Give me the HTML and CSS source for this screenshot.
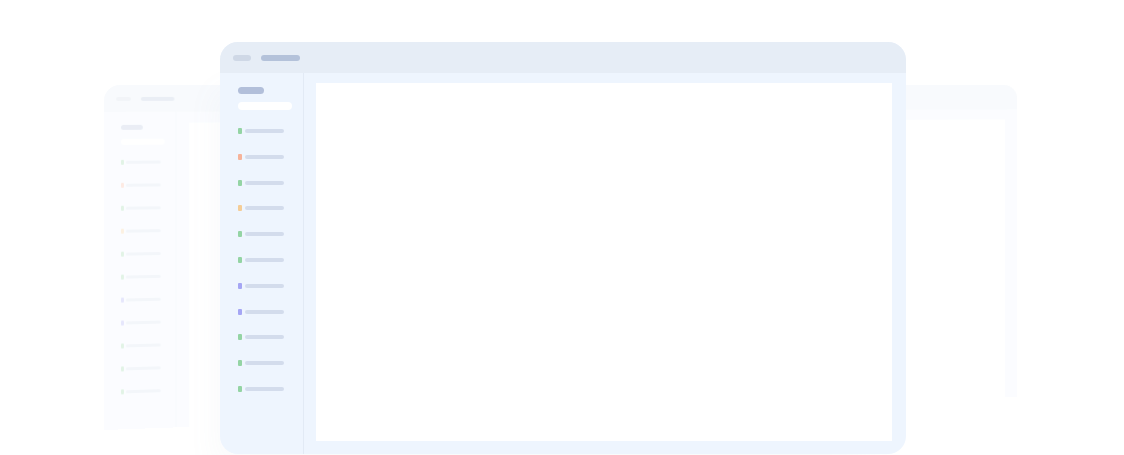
FILE: index.html
```html
<!DOCTYPE html>
<html lang="en">
<head>
    <meta charset="UTF-8">
    <meta name="viewport" content="width=device-width, initial-scale=1.0">
    <title>Workspace preview</title>
    <link rel="stylesheet" href="styles.css">
</head>
<body>
    <div class="stage">
        <!-- back window, tilted away -->
        <div class="window-back">
            <div class="back-titlebar">
                <span class="back-pill back-pill-short"></span>
                <span class="back-pill back-pill-long"></span>
            </div>
            <div class="back-body">
                <div class="back-sidebar">
                    <div class="back-heading"></div>
                    <div class="back-search"></div>
                    <div class="back-list">
                        <div class="back-item"><span class="back-dot green"></span><span class="back-line"></span></div>
                        <div class="back-item"><span class="back-dot salmon"></span><span class="back-line"></span></div>
                        <div class="back-item"><span class="back-dot green"></span><span class="back-line"></span></div>
                        <div class="back-item"><span class="back-dot amber"></span><span class="back-line"></span></div>
                        <div class="back-item"><span class="back-dot green"></span><span class="back-line"></span></div>
                        <div class="back-item"><span class="back-dot green"></span><span class="back-line"></span></div>
                        <div class="back-item"><span class="back-dot violet"></span><span class="back-line"></span></div>
                        <div class="back-item"><span class="back-dot violet"></span><span class="back-line"></span></div>
                        <div class="back-item"><span class="back-dot green"></span><span class="back-line"></span></div>
                        <div class="back-item"><span class="back-dot green"></span><span class="back-line"></span></div>
                        <div class="back-item"><span class="back-dot green"></span><span class="back-line"></span></div>
                    </div>
                </div>
                <div class="back-main">
                    <div class="back-canvas"></div>
                </div>
            </div>
        </div>

        <!-- front window -->
        <div class="window">
            <div class="titlebar">
                <span class="pill pill-short"></span>
                <span class="pill pill-long"></span>
            </div>
            <div class="window-body">
                <div class="sidebar">
                    <div class="sidebar-heading"></div>
                    <div class="sidebar-search"></div>
                    <div class="item-list">
                        <div class="item"><span class="dot green"></span><span class="line"></span></div>
                        <div class="item"><span class="dot salmon"></span><span class="line"></span></div>
                        <div class="item"><span class="dot green"></span><span class="line"></span></div>
                        <div class="item"><span class="dot amber"></span><span class="line"></span></div>
                        <div class="item"><span class="dot green"></span><span class="line"></span></div>
                        <div class="item"><span class="dot green"></span><span class="line"></span></div>
                        <div class="item"><span class="dot violet"></span><span class="line"></span></div>
                        <div class="item"><span class="dot violet"></span><span class="line"></span></div>
                        <div class="item"><span class="dot green"></span><span class="line"></span></div>
                        <div class="item"><span class="dot green"></span><span class="line"></span></div>
                        <div class="item"><span class="dot green"></span><span class="line"></span></div>
                    </div>
                </div>
                <div class="main">
                    <div class="canvas"></div>
                </div>
            </div>
        </div>
    </div>
</body>
</html>
```

FILE: styles.css
```css
body {
    margin: 0;
    background-color: #fff;
    font-family: "Liberation Sans", Arial, sans-serif;
    overflow: hidden;
}

.stage {
    position: relative;
    width: 1124px;
    height: 455px;
    overflow: hidden;
}

/* colour chips shared by both windows */
.green { background-color: #94d4a4; }
.salmon { background-color: #f6b39a; }
.amber { background-color: #f4cd97; }
.violet { background-color: #a5a6f4; }

/* ---------- front window ---------- */

.window {
    position: absolute;
    left: 220px;
    top: 42px;
    width: 686px;
    height: 412px;
    border-radius: 18px;
    background-color: #eef5fe;
    display: flex;
    flex-direction: column;
    overflow: hidden;
    box-shadow: -22px 30px 30px -18px rgba(140, 155, 180, 0.05);
}

.titlebar {
    height: 31px;
    flex-shrink: 0;
    background-color: #e6edf6;
    display: flex;
    align-items: center;
    gap: 10px;
    padding-left: 13px;
}

.pill {
    height: 6px;
    border-radius: 3px;
}

.pill-short {
    width: 18px;
    background-color: #cfd8e6;
}

.pill-long {
    width: 39px;
    background-color: #b4c2da;
}

.window-body {
    flex-grow: 1;
    display: flex;
}

.sidebar {
    width: 65px;
    padding: 14px 0 0 18px;
    border-right: 1px solid #e2eaf5;
}

.sidebar-heading {
    width: 26px;
    height: 7px;
    border-radius: 4px;
    background-color: #b2bfda;
}

.sidebar-search {
    width: 54px;
    height: 8px;
    margin-top: 8px;
    border-radius: 4px;
    background-color: #fff;
}

.item-list {
    display: flex;
    flex-direction: column;
    gap: 19.8px;
    margin-top: 18px;
}

.item {
    display: flex;
    align-items: center;
    height: 6px;
}

.dot {
    width: 4px;
    height: 6px;
    border-radius: 1px;
}

.line {
    width: 39px;
    height: 4px;
    margin-left: 3px;
    border-radius: 2px;
    background-color: #d3dcec;
}

.main {
    flex-grow: 1;
    display: flex;
    padding: 10px 14px 13px 12px;
}

.canvas {
    flex-grow: 1;
    background-color: #fff;
}

/* ---------- back window (tilted, faded) ---------- */

.window-back {
    position: absolute;
    left: 104px;
    top: 85px;
    width: 1010px;
    height: 345px;
    transform-origin: 0 0;
    transform: matrix3d(1, 0, 0, 0.0001048, 0, 1, 0, 0, 0, 0, 1, 0, 0, 0, 0, 1);
    border-radius: 16px 16px 0 0;
    background-color: #eef5fe;
    display: flex;
    flex-direction: column;
    overflow: hidden;
    opacity: 0.28;
}

.back-titlebar {
    height: 27px;
    flex-shrink: 0;
    background-color: #e6edf6;
    display: flex;
    align-items: center;
    gap: 10px;
    padding-left: 12px;
}

.back-pill {
    height: 4px;
    border-radius: 2px;
}

.back-pill-short {
    width: 15px;
    background-color: #cfd8e6;
}

.back-pill-long {
    width: 34px;
    background-color: #b4c2da;
}

.back-body {
    flex-grow: 1;
    display: flex;
}

.back-sidebar {
    width: 55px;
    padding: 13px 0 0 17px;
    border-right: 1px solid #e2eaf5;
}

.back-heading {
    width: 22px;
    height: 5px;
    border-radius: 3px;
    background-color: #b2bfda;
}

.back-search {
    width: 44px;
    height: 6px;
    margin-top: 9px;
    border-radius: 3px;
    background-color: #fff;
}

.back-list {
    display: flex;
    flex-direction: column;
    gap: 18px;
    margin-top: 15px;
}

.back-item {
    display: flex;
    align-items: center;
    height: 5px;
}

.back-dot {
    width: 3px;
    height: 5px;
    border-radius: 1px;
}

.back-line {
    width: 35px;
    height: 3px;
    margin-left: 2px;
    border-radius: 2px;
    background-color: #d3dcec;
}

.back-main {
    flex-grow: 1;
    display: flex;
    padding: 11px 15px 0 13px;
}

.back-canvas {
    flex-grow: 1;
    background-color: #fff;
}
```
